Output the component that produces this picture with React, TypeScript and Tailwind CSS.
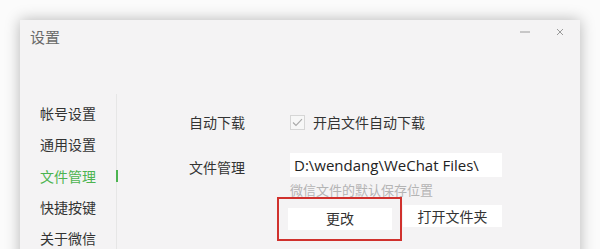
import React from "react";

const FONT = "font-['Microsoft_YaHei','Noto_Sans_CJK_SC','Noto_Sans',sans-serif]";

const NAV = ["帐号设置", "通用设置", "文件管理", "快捷按键", "关于微信"];
const ACTIVE = "文件管理";

const Sidebar: React.FC = () => (
  <div className="mt-[40px] flex w-[97px] shrink-0 flex-col border-r border-[#e6e6e6] pt-[4px]">
    {NAV.map(item => (
      <div
        key={item}
        className={`relative flex h-[31.25px] items-center pl-[20px] text-[14px] ${
          item === ACTIVE ? "text-[#4cb450]" : "text-[#333]"
        }`}
      >
        {item}
        {item === ACTIVE && (
          <span className="absolute right-[-1.5px] top-[9px] h-[12px] w-[2px] bg-[#4cb450]" />
        )}
      </div>
    ))}
  </div>
);

const FilePanel: React.FC = () => (
  <div className="mt-[56px] flex flex-col pl-[72px]">
    {/* 自动下载 */}
    <div className="flex h-[24px] items-center">
      <span className="w-[101px] text-[14px] text-[#333]">自动下载</span>
      <span className="flex h-[15px] w-[15px] items-center justify-center border border-[#d6d6d6] bg-[#f7f7f7]">
        <svg width="11" height="9" viewBox="0 0 11 9" fill="none">
          <path d="M1 4.5 L4 7.5 L10 1.2" stroke="#a9a9a9" strokeWidth="1.1" />
        </svg>
      </span>
      <span className="ml-[8px] text-[14px] text-[#333]">开启文件自动下载</span>
    </div>

    {/* 文件管理 */}
    <div className="mt-[19px] flex items-start">
      <span className="mt-[2px] w-[101px] text-[14px] leading-[24px] text-[#333]">文件管理</span>
      <div className="flex flex-col">
        <div className="flex h-[24px] w-[212px] items-center bg-white pl-[4px] font-['Open_Sans',sans-serif] text-[15px] text-[#222]">
          D:\wendang\WeChat Files\
        </div>
        <span className="mt-[5px] text-[13px] leading-[16px] text-[#b4b4b4]">微信文件的默认保存位置</span>
        <div className="mt-[7px] ml-[-2px] flex">
          <div className="relative">
            <button className="h-[22px] w-[104px] bg-white text-[14px] text-[#333]">更改</button>
            <span className="pointer-events-none absolute -left-[11px] -top-[8px] -right-[10px] -bottom-[11px] border-2 border-[#d0312d]" />
          </div>
          <button className="ml-[11px] h-[22px] w-[99px] bg-white text-[14px] text-[#333]">打开文件夹</button>
        </div>
      </div>
    </div>
  </div>
);

export default function App() {
  return (
    <div className={`h-[249px] w-[600px] overflow-hidden bg-[#fbfbfb] pl-[20px] pt-[20px] ${FONT}`}>
      <div className="flex h-[260px] w-[560px] flex-col bg-[#f4f3f4] shadow-[0_0_14px_rgba(0,0,0,0.28)]">
        {/* title bar */}
        <div className="flex h-[34px] shrink-0 items-start justify-between">
          <span className="ml-[10px] mt-[7px] text-[15px] leading-[20px] text-[#6a6a6a]">设置</span>
          <div className="mr-[16px] mt-[8px] flex items-center gap-[26px]">
            <svg width="10" height="8" viewBox="0 0 10 8">
              <path d="M0 4 H10" stroke="#9a9a9a" strokeWidth="1" />
            </svg>
            <svg width="8" height="8" viewBox="0 0 8 8">
              <path d="M1 1 L7 7 M7 1 L1 7" stroke="#9a9a9a" strokeWidth="1" />
            </svg>
          </div>
        </div>
        <div className="flex flex-1">
          <Sidebar />
          <FilePanel />
        </div>
      </div>
    </div>
  );
}
